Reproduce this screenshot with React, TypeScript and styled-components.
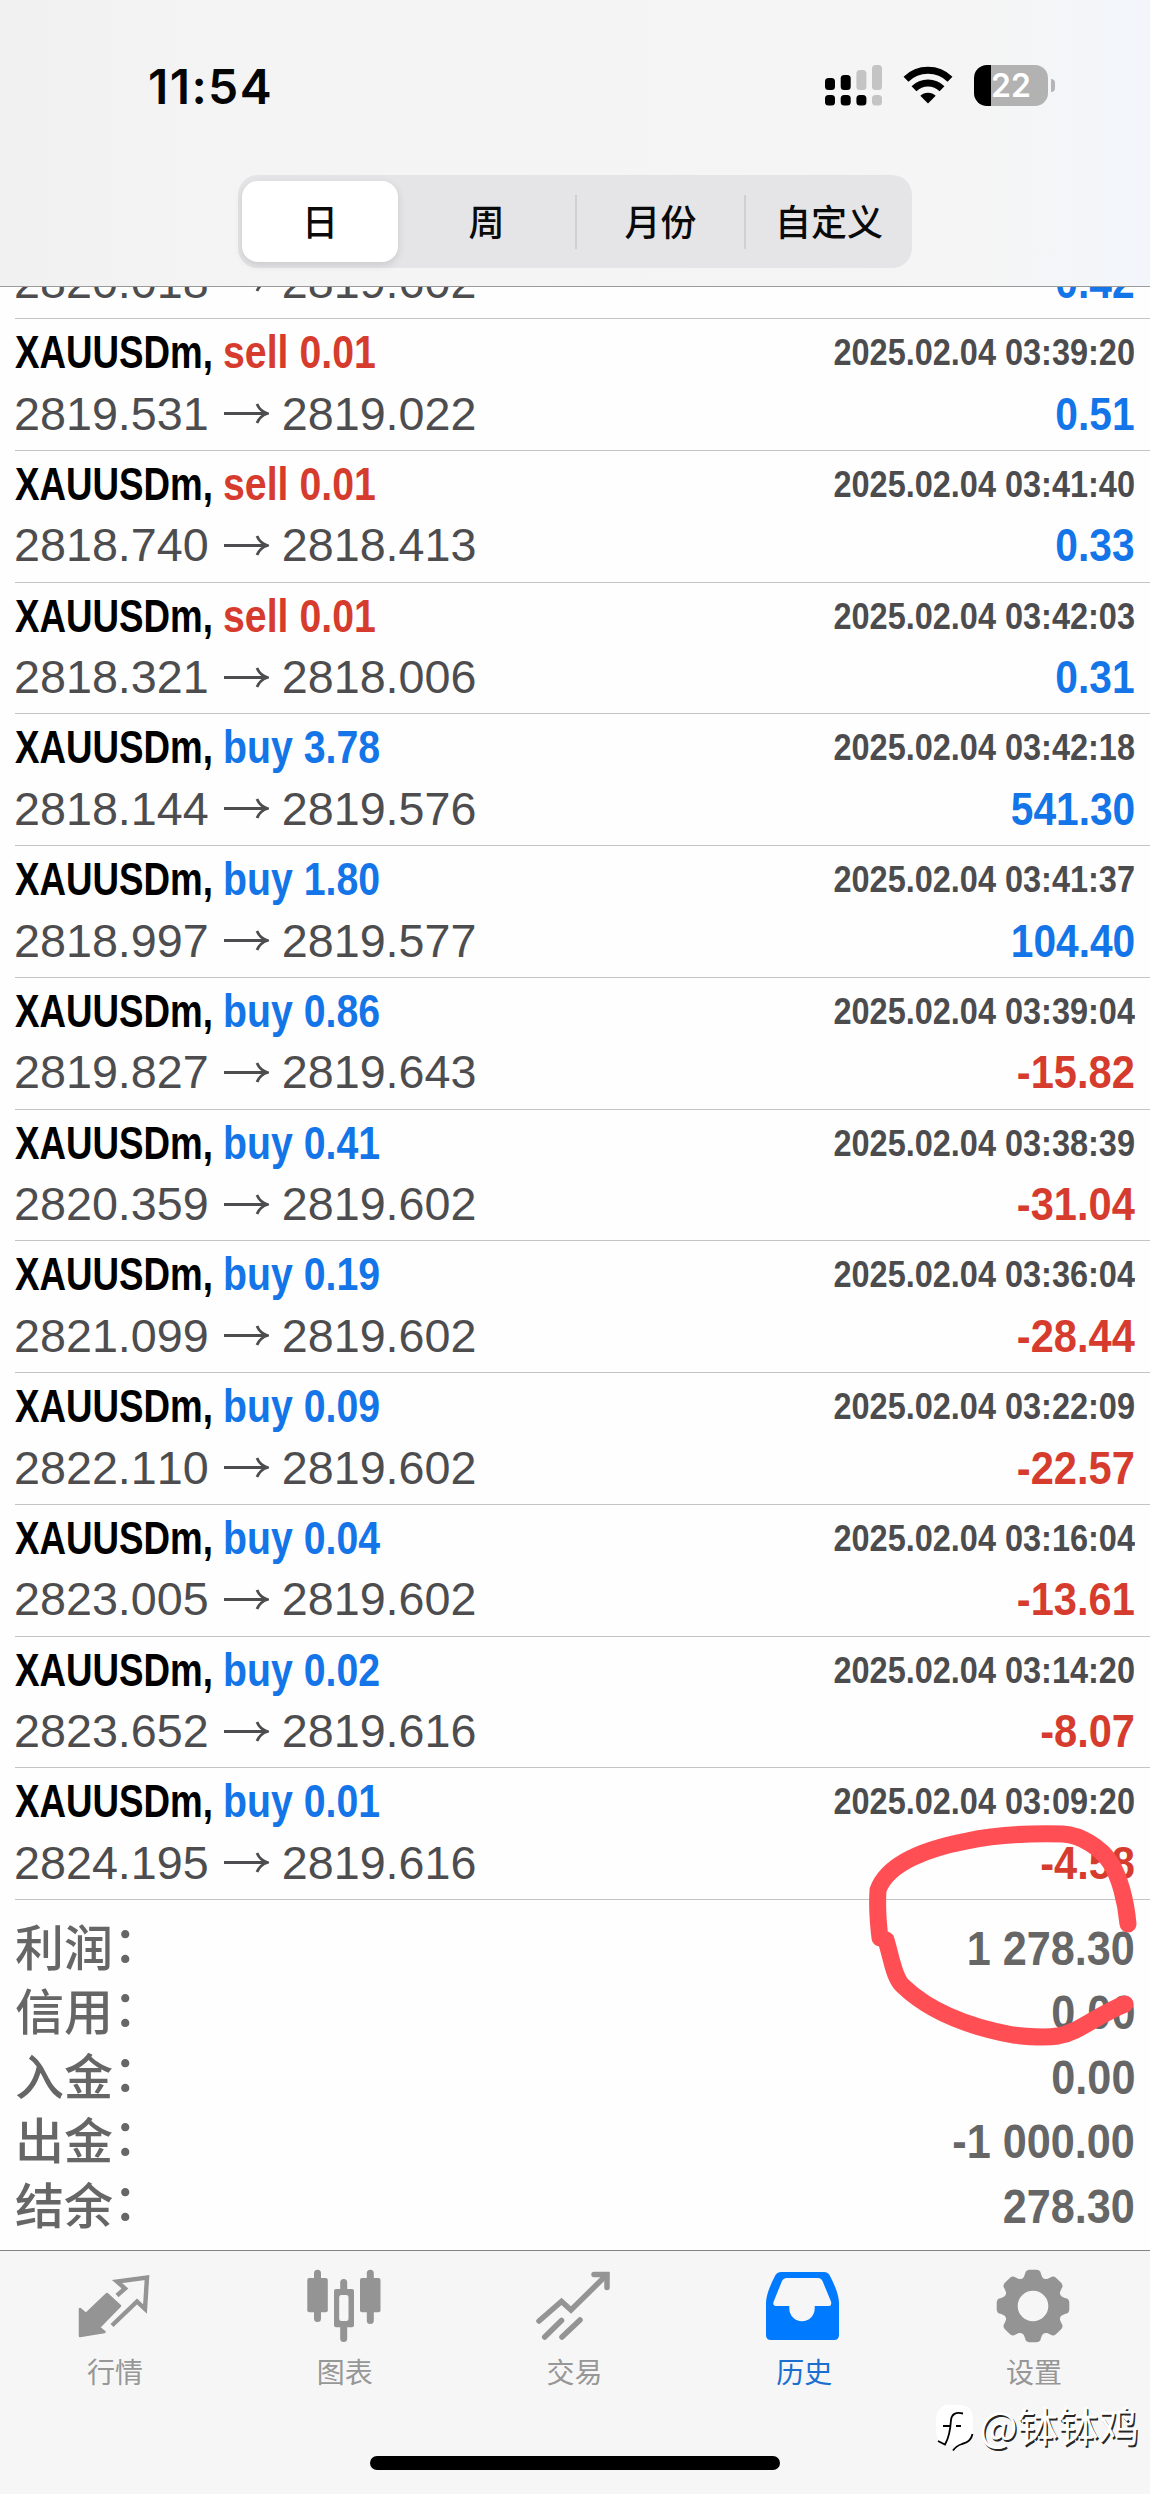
import React from 'react';
import styled, { createGlobalStyle } from 'styled-components';

const Global = createGlobalStyle`
  body { margin: 0; background: #fefefe; }
  * { box-sizing: border-box; }
`;

const LATIN = `"Liberation Sans", Arial, sans-serif`;
const CJK = `"Noto Sans CJK SC", sans-serif`;
const BLUE = '#1475e8';
const RED = '#d63c2e';

const Screen = styled.div`
  position: relative;
  width: 1150px;
  height: 2494px;
  overflow: hidden;
  display: flex;
  flex-direction: column;
  background: #fefefe;
  font-family: ${LATIN};
`;

const Header = styled.header`
  height: 287px;
  flex: none;
  display: flex;
  flex-direction: column;
  align-items: center;
  border-bottom: 1px solid #9b9b9b;
  background: linear-gradient(90deg, #f1f1f2 0%, #f4f4f4 22%, #f5f5f5 85%, #f2f6fb 100%);
`;

const StatusBar = styled.div`
  width: 100%;
  height: 175px;
  padding: 65px 95px 0 148px;
  display: flex;
  align-items: flex-start;
`;

const Clock = styled.div`
  flex: 1;
  font: 600 48px/43px Inter, sans-serif;
  letter-spacing: 1.4px;
  color: #050505;
`;

const StatusIcons = styled.div`
  display: flex;
  gap: 21px;
  height: 41px;
`;

const Battery = styled.div`
  width: 81px;
  height: 41px;
  display: flex;
  align-items: center;
  gap: 3px;
`;

const BatteryBody = styled.div`
  width: 74px;
  height: 41px;
  border-radius: 13px;
  background: linear-gradient(90deg, #000 17px, #b2b2b3 17px);
  color: #fff;
  font: 600 32px/42px Inter, sans-serif;
  text-align: center;
`;

const BatteryNub = styled.div`
  width: 4px;
  height: 13px;
  border-radius: 0 5px 5px 0;
  background: #b5b5b7;
`;

const Segmented = styled.div`
  width: 674px;
  height: 93px;
  padding: 6px 0 6px 4px;
  border-radius: 20px;
  display: flex;
  background: #e5e5e7;
`;

const Segment = styled.div<{ $w: number; $active?: boolean }>`
  width: ${p => p.$w}px;
  height: 81px;
  flex: none;
  text-align: center;
  border-radius: 16px;
  font: 500 36px/79px ${CJK};
  color: #0a0a0a;
  background: ${p => (p.$active ? '#fff' : 'transparent')};
  box-shadow: ${p => (p.$active ? '0 3px 8px rgba(0,0,0,.12)' : 'none')};
`;

const Divider = styled.div`
  width: 2px;
  height: 54px;
  flex: none;
  margin-top: 14px;
  background: #d0d0d3;
`;

const List = styled.main`
  height: 1963px;
  flex: none;
  overflow: hidden;
  display: flex;
  flex-direction: column;
  justify-content: flex-end;
`;

const Row = styled.div<{ $partial?: boolean }>`
  height: ${p => (p.$partial ? 66.75 : 131.75)}px;
  flex: none;
  margin-left: 15px;
  padding-right: 15px;
  border-bottom: 1px solid #c4c4c6;
`;

const TopLine = styled.div`
  height: 65px;
  display: flex;
  align-items: flex-start;
  white-space: nowrap;
`;

const Symbol = styled.span`
  width: 208px;
  font-weight: 700;
  font-size: 46.5px;
  line-height: 67px;
  color: #000;
  transform: scaleX(0.79);
  transform-origin: left;
`;

const Side = styled.span<{ $buy: boolean }>`
  flex: 1;
  font-weight: 700;
  font-size: 46.3px;
  line-height: 67px;
  color: ${p => (p.$buy ? BLUE : RED)};
  transform: scaleX(0.848);
  transform-origin: left;
`;

const Stamp = styled.span`
  font-weight: 700;
  font-size: 37.8px;
  line-height: 67px;
  color: #4c4c4e;
  transform: scaleX(0.859);
  transform-origin: right;
`;

const BottomLine = styled.div`
  height: 60px;
  display: flex;
  align-items: center;
  justify-content: space-between;
  white-space: nowrap;
`;

const Prices = styled.span`
  display: flex;
  align-items: center;
  margin-left: -1px;
  font-size: 46.7px;
  font-kerning: none;
  line-height: 61px;
  color: #4d4d4f;
`;

const ArrowSvg = styled.svg`
  width: 46px;
  height: 22px;
  margin: -2px 13px 0 14px;
`;

const Profit = styled.span<{ $neg: boolean }>`
  font-weight: 700;
  font-size: 46.5px;
  line-height: 61px;
  color: ${p => (p.$neg ? RED : BLUE)};
  transform: scaleX(${p => (p.$neg ? 0.895 : 0.875)});
  transform-origin: right;
`;

const Summary = styled.div`
  height: 350px;
  flex: none;
  padding: 17px 15px 0;
`;

const SummaryRow = styled.div`
  height: 64.4px;
  display: flex;
  justify-content: space-between;
  color: #666;
`;

const Label = styled.span`
  font: 500 49px/56px ${CJK};
`;

const Colon = styled.span`
  line-height: 0;
  vertical-align: 4px;
`;

const Total = styled.span`
  font-weight: 700;
  font-size: 48px;
  line-height: 63px;
  transform: scaleX(0.9);
  transform-origin: right;
`;

const TabBar = styled.nav`
  position: relative;
  height: 244px;
  flex: none;
  border-top: 1px solid #858585;
  background: #f6f6f6;
  display: flex;
  flex-direction: column;
  align-items: center;
  justify-content: space-between;
  padding: 15px 0 24px;
`;

const Tabs = styled.div`
  width: 1150px;
  display: grid;
  grid-template-columns: repeat(5, 229.8px);
`;

const Tab = styled.div<{ $active?: boolean }>`
  display: flex;
  flex-direction: column;
  align-items: center;
  gap: 7px;
  color: ${p => (p.$active ? '#007aff' : '#949494')};
  svg { width: 80px; height: 80px; display: block; }
`;

const TabLabel = styled.span<{ $active?: boolean }>`
  font: 400 28px/36px ${CJK};
  color: ${p => (p.$active ? '#1b6fd0' : '#979797')};
`;

const HomeIndicator = styled.div`
  width: 410px;
  height: 14px;
  border-radius: 7px;
  background: #000;
`;

const Watermark = styled.div`
  position: absolute;
  right: 11px;
  top: 147px;
  display: flex;
  align-items: center;
  gap: 4px;
  font: 400 40.5px/54px ${CJK};
  color: #fff;
  white-space: nowrap;
  text-shadow: 1.5px 1.5px 0.5px rgba(0, 0, 0, 0.85);
  svg { width: 42px; height: 48px; margin-top: 6px; }
`;

const Scribble = styled.svg`
  position: absolute;
  left: 860px;
  top: 1815px;
  width: 290px;
  height: 240px;
`;

const Arrow = () => (
  <ArrowSvg viewBox="0 0 46 22" fill="none" stroke="#4d4d4f" strokeWidth="2.8">
    <path d="M1 11.5H44" />
    <path d="M34 2C36 7 39.5 10 44.5 11.5C39.5 13 36 16 34 21" />
  </ArrowSvg>
);

const gear = Array.from({ length: 8 }, (_, i) => {
  const pt = (deg: number, r: number) => {
    const a = ((i * 45 + deg - 90) * Math.PI) / 180;
    return `${(39 + r * Math.cos(a)).toFixed(2)} ${(40 + r * Math.sin(a)).toFixed(2)}`;
  };
  return `${i ? 'L' : 'M'}${pt(-17.5, 30.5)}L${pt(-13.5, 33.5)}Q${pt(-12, 36.5)} ${pt(-6, 36.5)}L${pt(6, 36.5)}Q${pt(12, 36.5)} ${pt(13.5, 33.5)}L${pt(17.5, 30.5)}Q${pt(22.5, 28.5)} ${pt(27.5, 30.5)}`;
}).join('') + 'Z';

const icons: Record<string, React.ReactNode> = {
  行情: (
    <svg viewBox="0 0 80 80">
      <path d="M5 43L11 48L32 28L45 40L24 61.5L29.5 66L5 70Z" fill="currentColor" stroke="currentColor" strokeWidth="2.5" strokeLinejoin="round" />
      <path d="M42 29.5L50 22.5L42 15.5L72 11.5L70 43L62 35.5L37 59.5" fill="none" stroke="currentColor" strokeWidth="4.4" />
    </svg>
  ),
  图表: (
    <svg viewBox="0 0 80 80" fill="currentColor">
      <rect x="2.3" y="12" width="20.5" height="34.3" rx="2" />
      <rect x="9" y="3.7" width="7" height="52.3" rx="3.5" />
      <rect x="55" y="12" width="20.5" height="34.3" rx="2" />
      <rect x="61.8" y="3.7" width="7" height="54.3" rx="3.5" />
      <rect x="35.2" y="13" width="7" height="14" rx="3.5" />
      <rect x="35.2" y="57" width="7" height="19" rx="3.5" />
      <path fillRule="evenodd" d="M31 23H47Q49 23 49 25V59Q49 61.3 47 61.3H31Q29 61.3 29 59V25Q29 23 31 23ZM36.5 29Q34.2 29 34.2 31V53Q34.2 55 36.5 55H41.2Q43.5 55 43.5 53V31Q43.5 29 41.2 29Z" />
    </svg>
  ),
  交易: (
    <svg viewBox="0 0 80 80" fill="none" stroke="currentColor" strokeWidth="5.5" strokeLinecap="round">
      <path d="M5 55L27.5 35.5L37 44L72.5 9" />
      <path d="M60 8.5H73V21.5" />
      <path d="M27.5 54.5L10.7 71M46 54L28 71" />
    </svg>
  ),
  历史: (
    <svg viewBox="0 0 80 80">
      <path fill="currentColor" d="M17 6H60Q63.5 6 65.5 9Q75 27 75 37V69Q75 74 70 74H7Q2 74 2 69V37Q2 27 11.5 9Q13.5 6 17 6Z" />
      <path fill="#f6f6f6" d="M23 12H54Q57 12 58.5 15L67 35.5Q68 40 65 40H50.7V42.5A12.6 12.6 0 0 1 25.3 42.5V40H12Q8.5 40 9.5 36L18 15Q19.5 12 23 12Z" />
    </svg>
  ),
  设置: (
    <svg viewBox="0 0 80 80">
      <path fill="currentColor" fillRule="evenodd" d={`${gear}M39 24.7A15.3 15.3 0 1 0 39 55.3A15.3 15.3 0 1 0 39 24.7Z`} />
    </svg>
  ),
};

const trades: [string, string, string, string, string, string][] = [
  ['sell', '0.01', '2025.02.04 03:39:20', '2819.531', '2819.022', '0.51'],
  ['sell', '0.01', '2025.02.04 03:41:40', '2818.740', '2818.413', '0.33'],
  ['sell', '0.01', '2025.02.04 03:42:03', '2818.321', '2818.006', '0.31'],
  ['buy', '3.78', '2025.02.04 03:42:18', '2818.144', '2819.576', '541.30'],
  ['buy', '1.80', '2025.02.04 03:41:37', '2818.997', '2819.577', '104.40'],
  ['buy', '0.86', '2025.02.04 03:39:04', '2819.827', '2819.643', '-15.82'],
  ['buy', '0.41', '2025.02.04 03:38:39', '2820.359', '2819.602', '-31.04'],
  ['buy', '0.19', '2025.02.04 03:36:04', '2821.099', '2819.602', '-28.44'],
  ['buy', '0.09', '2025.02.04 03:22:09', '2822.110', '2819.602', '-22.57'],
  ['buy', '0.04', '2025.02.04 03:16:04', '2823.005', '2819.602', '-13.61'],
  ['buy', '0.02', '2025.02.04 03:14:20', '2823.652', '2819.616', '-8.07'],
  ['buy', '0.01', '2025.02.04 03:09:20', '2824.195', '2819.616', '-4.58'],
];

const totals = [
  ['利润', '1 278.30'],
  ['信用', '0.00'],
  ['入金', '0.00'],
  ['出金', '-1 000.00'],
  ['结余', '278.30'],
];

const PriceLine = ({ from, to, profit }: { from: string; to: string; profit: string }) => (
  <BottomLine>
    <Prices>{from}<Arrow />{to}</Prices>
    <Profit $neg={profit.startsWith('-')}>{profit}</Profit>
  </BottomLine>
);

export default function App() {
  return (
    <Screen>
      <Global />
      <Header>
        <StatusBar>
          <Clock>11:54</Clock>
          <StatusIcons>
            <svg width="57" height="41" viewBox="0 0 57 41">
              <rect x="0" y="13" width="10" height="12" rx="3.5" />
              <rect x="15.7" y="10" width="10" height="15" rx="3.5" />
              <rect x="31.4" y="5" width="10" height="20" rx="3.5" fill="#c4c4c5" />
              <rect x="47" y="0" width="10" height="25" rx="3.5" fill="#c4c4c5" />
              <rect x="0" y="30" width="10" height="10.5" rx="3.5" />
              <rect x="15.7" y="30" width="10" height="10.5" rx="3.5" />
              <rect x="31.4" y="30" width="10" height="10.5" rx="3.5" />
              <rect x="47" y="30" width="10" height="10.5" rx="3.5" fill="#c4c4c5" />
            </svg>
            <svg width="50" height="41" viewBox="0 0 50 41" fill="none" stroke="#000" strokeWidth="7">
              <path d="M3 14.2A31.5 31.5 0 0 1 47 14.2" />
              <path d="M11 23.7A20 20 0 0 1 39 23.7" />
              <path d="M25 38.5L17.3 30.8A11 11 0 0 1 32.7 30.8Z" fill="#000" stroke="none" />
            </svg>
            <Battery>
              <BatteryBody>22</BatteryBody>
              <BatteryNub />
            </Battery>
          </StatusIcons>
        </StatusBar>
        <Segmented>
          <Segment $w={156} $active>日</Segment>
          <Segment $w={177}>周</Segment>
          <Divider />
          <Segment $w={167}>月份</Segment>
          <Divider />
          <Segment $w={166}>自定义</Segment>
        </Segmented>
      </Header>
      <List>
        <Row $partial>
          <PriceLine from="2820.018" to="2819.602" profit="0.42" />
        </Row>
        {trades.map(([side, lots, time, from, to, profit]) => (
          <Row key={from}>
            <TopLine>
              <Symbol>XAUUSDm,</Symbol>
              <Side $buy={side === 'buy'}>{side} {lots}</Side>
              <Stamp>{time}</Stamp>
            </TopLine>
            <PriceLine from={from} to={to} profit={profit} />
          </Row>
        ))}
        <Summary>
          {totals.map(([label, value]) => (
            <SummaryRow key={label}>
              <Label>{label}<Colon>：</Colon></Label>
              <Total>{value}</Total>
            </SummaryRow>
          ))}
        </Summary>
      </List>
      <TabBar>
        <Tabs>
          {Object.keys(icons).map(name => (
            <Tab key={name} $active={name === '历史'}>
              {icons[name]}
              <TabLabel $active={name === '历史'}>{name}</TabLabel>
            </Tab>
          ))}
        </Tabs>
        <HomeIndicator />
        <Watermark>
          <svg viewBox="0 0 42 48">
            <path d="M12 1H28Q40 2 40 16V28Q40 38 30 40L21 47L21 41L10 40Q2 37 3 18Q3 4 12 1Z" fill="#fff" />
            <path d="M30 9.5Q19 7 18 16Q17 32 12 40.5L5 37M10 22H18M23 22H28M39.5 30Q38 38 29 40Q23 42 20 46.5" fill="none" stroke="#000" strokeWidth="1.8" />
          </svg>
          @钵钵鸡
        </Watermark>
      </TabBar>
      <Scribble viewBox="860 1815 290 240" fill="none" stroke="#ff4f55" strokeWidth="17" strokeLinecap="round" strokeLinejoin="round">
        <path d="M1128 1924C1126 1902 1120 1877 1110 1862C1101 1848 1081 1835 1063 1834C1028 1833 995 1835 967 1841C930 1848 888 1862 878 1890C877 1906 878 1922 880 1938" />
        <path d="M886 1940C892 1960 894 1978 903 1986C930 2012 970 2027 1013 2035C1030 2037 1045 2038 1058 2036C1080 2032 1095 2016 1125 2004" />
      </Scribble>
    </Screen>
  );
}
